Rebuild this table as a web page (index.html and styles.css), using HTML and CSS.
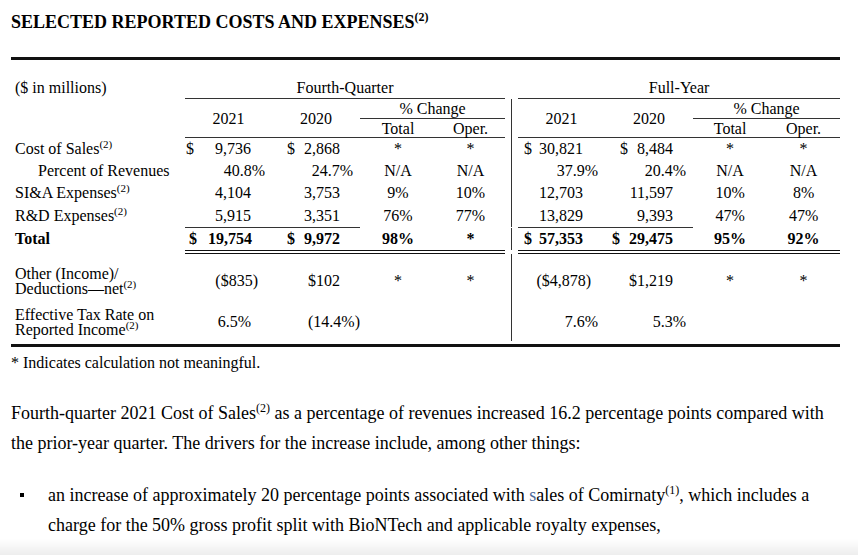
FILE: index.html
```html
<!DOCTYPE html>
<html>
<head>
<meta charset="utf-8">
<link rel="stylesheet" href="styles.css">
</head>
<body>
<div class="page">
  <h1 class="title">SELECTED REPORTED COSTS AND EXPENSES<sup class="sup-b">(2)</sup></h1>
  <div class="rule-thick top"></div>
  <table class="fin">
    <colgroup>
      <col class="c-label"><col class="c-y1"><col class="c-y2"><col class="c-qt"><col class="c-qo">
      <col class="c-sep">
      <col class="c-y1"><col class="c-y2"><col class="c-ft"><col class="c-fo">
    </colgroup>
    <tr class="r-h1">
      <td class="lbl">($ in millions)</td>
      <th colspan="4" class="ln">Fourth-Quarter</th>
      <td></td>
      <th colspan="4" class="ln">Full-Year</th>
    </tr>
    <tr class="r-h2">
      <td rowspan="2"></td>
      <th rowspan="2" class="ln">2021</th>
      <th rowspan="2" class="ln">2020</th>
      <th colspan="2" class="ln">% Change</th>
      <td class="sep"></td>
      <th rowspan="2" class="ln">2021</th>
      <th rowspan="2" class="ln">2020</th>
      <th colspan="2" class="ln">% Change</th>
    </tr>
    <tr class="r-h3">
      <th class="ln">Total</th>
      <th class="ln">Oper.</th>
      <td class="sep"></td>
      <th class="ln">Total</th>
      <th class="ln">Oper.</th>
    </tr>
    <tr class="r-d">
      <td class="lbl">Cost of Sales<sup>(2)</sup></td>
      <td class="q1"><span class="cur">$</span>9,736</td>
      <td class="q2"><span class="cur">$</span>2,868</td>
      <td class="ctr">*</td>
      <td class="ctr">*</td>
      <td class="sep"></td>
      <td class="f1"><span class="cur">$</span>30,821</td>
      <td class="f2"><span class="cur">$</span>8,484</td>
      <td class="ctr">*</td>
      <td class="ctr">*</td>
    </tr>
    <tr class="r-d">
      <td class="lbl sub">Percent of Revenues</td>
      <td class="q1 pct">40.8%</td>
      <td class="q2 pct">24.7%</td>
      <td class="ctr">N/A</td>
      <td class="ctr">N/A</td>
      <td class="sep"></td>
      <td class="f1 pct">37.9%</td>
      <td class="f2 pct">20.4%</td>
      <td class="ctr">N/A</td>
      <td class="ctr">N/A</td>
    </tr>
    <tr class="r-d">
      <td class="lbl">SI&amp;A Expenses<sup>(2)</sup></td>
      <td class="q1">4,104</td>
      <td class="q2">3,753</td>
      <td class="ctr">9%</td>
      <td class="ctr">10%</td>
      <td class="sep"></td>
      <td class="f1">12,703</td>
      <td class="f2">11,597</td>
      <td class="ctr">10%</td>
      <td class="ctr">8%</td>
    </tr>
    <tr class="r-d r-rd">
      <td class="lbl">R&amp;D Expenses<sup>(2)</sup></td>
      <td class="q1 ul">5,915</td>
      <td class="q2 ul">3,351</td>
      <td class="ctr">76%</td>
      <td class="ctr">77%</td>
      <td class="sep"></td>
      <td class="f1 ul">13,829</td>
      <td class="f2 ul">9,393</td>
      <td class="ctr">47%</td>
      <td class="ctr">47%</td>
    </tr>
    <tr class="r-d r-total">
      <td class="lbl">Total</td>
      <td class="q1 dbl tot1"><span class="cur">$</span>19,754</td>
      <td class="q2 dbl"><span class="cur">$</span>9,972</td>
      <td class="ctr dbl">98%</td>
      <td class="ctr dbl">*</td>
      <td class="sep"></td>
      <td class="f1 dbl"><span class="cur">$</span>57,353</td>
      <td class="f2 dbl tot2"><span class="cur">$</span>29,475</td>
      <td class="ctr dbl">95%</td>
      <td class="ctr dbl">92%</td>
    </tr>
    <tr class="r-x r-other">
      <td class="lbl two">Other (Income)/<br>Deductions—net<sup>(2)</sup></td>
      <td class="q1 neg">($835)</td>
      <td class="q2">$102</td>
      <td class="ctr">*</td>
      <td class="ctr">*</td>
      <td class="sep"></td>
      <td class="f1 neg">($4,878)</td>
      <td class="f2">$1,219</td>
      <td class="ctr">*</td>
      <td class="ctr">*</td>
    </tr>
    <tr class="r-x r-tax">
      <td class="lbl two">Effective Tax Rate on<br>Reported Income<sup>(2)</sup></td>
      <td class="q1">6.5%</td>
      <td class="q2 flush">(14.4%)</td>
      <td class="ctr"></td>
      <td class="ctr"></td>
      <td class="sep"></td>
      <td class="f1 pct">7.6%</td>
      <td class="f2 pct">5.3%</td>
      <td class="ctr"></td>
      <td class="ctr"></td>
    </tr>
  </table>
  <div class="rule-thick bottom"></div>
  <p class="note">* Indicates calculation not meaningful.</p>

  <p class="body">Fourth-quarter 2021 Cost of Sales<sup>(2)</sup> as a percentage of revenues increased 16.2 percentage points compared with the prior-year quarter. The drivers for the increase include, among other things:</p>

  <ul class="bullets">
    <li>an increase of approximately 20 percentage points associated with <span class="sel">s</span>ales of Comirnaty<sup>(1)</sup>, which includes a charge for the 50% gross profit split with BioNTech and applicable royalty expenses,</li>
  </ul>
</div>
<div class="shade"></div>
</body>
</html>
```

FILE: styles.css
```css
html, body {
  margin: 0;
  padding: 0;
  background: #fff;
}

body {
  font-family: "Liberation Serif", "Times New Roman", serif;
  color: #000;
  overflow: hidden;
}

.page {
  padding: 0 0 0 11px;
}

.title {
  margin: 0;
  padding-top: 11px;
  font-size: 18px;
  line-height: 22px;
  font-weight: bold;
}

.sup-b {
  font-size: 12px;
  line-height: 0;
  vertical-align: 7px;
}

.rule-thick {
  width: 829px;
  height: 3px;
  background: #111;
}

.rule-thick.top {
  margin-top: 24px;
}

.rule-thick.bottom {
  margin-top: 3px;
}

/* ---------- table ---------- */

.fin {
  width: 829px;
  table-layout: fixed;
  border-collapse: separate;
  border-spacing: 0;
  font-size: 16px;
  line-height: 18px;
}

.c-label { width: 174px; }
.c-y1 { width: 87px; }
.c-y2 { width: 88px; }
.c-qt { width: 76px; }
.c-qo { width: 69px; }
.c-sep { width: 13px; }
.c-ft { width: 74px; }
.c-fo { width: 73px; }

.fin th,
.fin td {
  padding: 0;
  white-space: nowrap;
  vertical-align: middle;
}

.fin th {
  font-weight: normal;
  text-align: center;
}

.fin th.ln {
  border-bottom: 1px solid #333;
}

.fin sup {
  font-size: 11px;
  line-height: 0;
  vertical-align: 6px;
}

.r-h1 { height: 39px; }
.r-h1 td, .r-h1 th {
  vertical-align: bottom;
  padding-bottom: 1px;
}
.r-h1 td.lbl { padding-bottom: 2px; }

.r-h2 { height: 20px; }
.r-h3 { height: 19px; }

.r-h2 th, .r-h3 th { line-height: 17px; }

.r-d { height: 22px; }
.r-rd { height: 24px; }
.r-total { height: 26px; }
.r-total td { border-bottom: 4px double transparent; }
.r-total td.dbl { border-bottom-color: #111; }
.r-total { font-weight: bold; }

.r-rd td { border-bottom: 1px solid transparent; }
.r-rd td.ul { border-bottom-color: #333; }

.r-other { height: 48px; }
.r-other td { padding-top: 6px; }
.r-tax { height: 39px; }

.lbl {
  padding-left: 4px !important;
  text-align: left;
}

.lbl.sub { padding-left: 27px !important; }

.lbl.two { line-height: 15px; }

.sep {
  background: linear-gradient(#333, #333) no-repeat center / 1px 100%;
}

.ctr { text-align: center; }

.q1, .q2, .f1, .f2 { text-align: right; }

.q1 { padding-left: 1px !important; padding-right: 21px !important; }
.q2 { padding-left: 15px !important; padding-right: 20px !important; }
.f1 { padding-left: 6px !important; padding-right: 22px !important; }
.f2 { padding-left: 15px !important; padding-right: 20px !important; }

.tot1 { padding-left: 4px !important; padding-right: 20px !important; }
.tot2 { padding-left: 7px !important; }

.fin td.pct { padding-right: 7px !important; }
.fin td.neg { padding-right: 14px !important; }
.fin td.flush { padding-right: 0 !important; }

.cur { float: left; }

/* ---------- text below ---------- */

.note {
  margin: 7px 0 0;
  font-size: 16px;
  line-height: 18px;
}

.body {
  margin: 26px 0 0;
  width: 830px;
  font-size: 18px;
  line-height: 30px;
}

.body sup, .bullets sup {
  font-size: 12px;
  line-height: 0;
  vertical-align: 7px;
}

.bullets {
  list-style: none;
  margin: 22px 0 0;
  padding: 0 0 0 37px;
  width: 800px;
  font-size: 18px;
  line-height: 30px;
}

.bullets li {
  position: relative;
}

.bullets li::before {
  content: "";
  position: absolute;
  left: -28px;
  top: 13px;
  width: 4px;
  height: 4px;
  background: #000;
}

.sel { color: #4b6a9b; }

.shade {
  position: fixed;
  left: 0;
  right: 0;
  bottom: 0;
  height: 16px;
  background: linear-gradient(rgba(0, 0, 0, 0), rgba(0, 0, 0, 0.07));
}
```
